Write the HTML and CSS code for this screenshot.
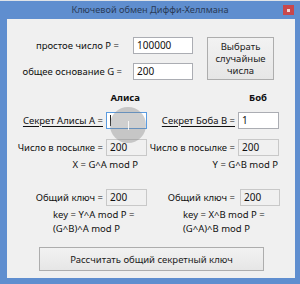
FILE: index.html
```html
<!DOCTYPE html>
<html lang="ru">
<head>
<meta charset="utf-8">
<link rel="stylesheet" href="styles.css">
</head>
<body>
<div class="window">
  <div class="titlebar">
    <span class="title">Ключевой обмен Диффи-Хеллмана</span>
    <span class="close"><span class="close-mark"></span></span>
  </div>
  <div class="client">
    <div class="params">
      <span class="lbl lbl-p">простое число P =</span>
      <span class="field">100000</span>
      <span class="lbl">общее основание G =</span>
      <span class="field">200</span>
      <div class="btn btn-random">Выбрать<br>случайные<br>числа</div>
    </div>

    <div class="parties">
      <div class="head head-a">Алиса</div>
      <div class="head head-b">Боб</div>

      <span class="lbl u r2">Секрет Алисы A =</span>
      <span class="field focus r2"><span class="caret"></span></span>
      <span class="lbl u r2">Секрет Боба B =</span>
      <span class="field r2">1</span>

      <span class="lbl r3">Число в посылке =</span>
      <span class="field ro r3">200</span>
      <span class="lbl r3">Число в посылке =</span>
      <span class="field ro r3">200</span>

      <div class="formula f-x">X = G^A mod P</div>
      <div class="formula f-y">Y = G^B mod P</div>
    </div>

    <div class="keys">
      <span class="lbl">Общий ключ =</span>
      <span class="field ro">200</span>
      <span class="lbl">Общий ключ =</span>
      <span class="field ro shift">200</span>

      <div class="keyf kf-a">key = Y^A mod P =<br>(G^B)^A mod P</div>
      <div class="keyf kf-b">key = X^B mod P =<br>(G^A)^B mod P</div>
    </div>

    <div class="bottom">
      <div class="btn btn-calc">Рассчитать общий секретный ключ</div>
    </div>

    <div class="touch"><span class="ibeam"></span></div>
  </div>
</div>
</body>
</html>
```

FILE: styles.css
```css
* { box-sizing: border-box; }
html, body { margin: 0; padding: 0; }
body {
  width: 300px;
  height: 284px;
  overflow: hidden;
  background: #dfe3e8;
  font-family: "Noto Sans", "Open Sans", sans-serif;
  font-size: 9.5px;
  color: #111;
}
.window {
  margin-top: 1px;
  width: 300px;
  height: 283px;
  background: #5f8ecf;
  display: flex;
  flex-direction: column;
}
.titlebar {
  height: 18px;
  display: flex;
  align-items: center;
  justify-content: center;
  position: relative;
}
.title {
  color: #2a3b57;
  font-size: 9.2px;
  line-height: 18px;
}
.close {
  position: absolute;
  left: 283px;
  top: 4px;
  width: 11px;
  height: 10px;
  background: #c9474b;
  display: flex;
  align-items: center;
  justify-content: center;
}
.close-mark {
  width: 3px;
  height: 3px;
  background: #f4d6d6;
}
.client {
  position: relative;
  margin: 0 5px 0 7px;
  height: 259px;
  background: #f0f0f0;
  display: flex;
  flex-direction: column;
}
.lbl {
  white-space: nowrap;
  justify-self: end;
  line-height: 14px;
}
.u { text-decoration: underline; text-underline-offset: 2px; }
.field {
  height: 17px;
  border: 1px solid #abadb3;
  background: #fff;
  padding: 0 3px;
  line-height: 15px;
  white-space: nowrap;
  display: flex;
  align-items: center;
  font-size: 10px;
}
.field.ro { background: #f0f0f0; border-color: #c8c8c8; }
.field.focus { border-color: #5a9be0; }
.caret { width: 1px; height: 11px; background: #222; }
.params {
  margin-top: 18px;
  display: grid;
  grid-template-columns: 115px 60px 70px;
  grid-template-rows: 17px 17px;
  column-gap: 11px;
  row-gap: 9px;
  align-items: center;
}
.params .field { grid-column: 2; }
.lbl-p { margin-right: 3px; }
.btn {
  border: 1px solid #adadad;
  background: linear-gradient(#f2f2f2, #e6e6e6);
  text-align: center;
  display: flex;
  align-items: center;
  justify-content: center;
}
.btn-random {
  grid-column: 3;
  grid-row: 1 / 3;
  align-self: stretch;
  margin-left: 3px;
  line-height: 12px;
  color: #222;
}
.parties, .keys {
  display: grid;
  grid-template-columns: 96px 41px 85px 41px;
  column-gap: 3px;
  align-items: center;
}
.parties {
  margin-top: 11px;
  grid-template-rows: 14px 24px 27px 16px;
}
.head {
  font-weight: bold;
  text-align: right;
  line-height: 14px;
  grid-row: 1;
}
.head-a { grid-column: 1 / 3; padding-right: 7px; }
.head-b { grid-column: 3 / 5; padding-right: 12px; }
.r2 { grid-row: 2; margin-top: 7px; }
.r3 { grid-row: 3; margin-top: 10px; }
.formula {
  grid-row: 4;
  text-align: right;
  line-height: 14px;
  margin-top: 2px;
}
.f-x { grid-column: 1 / 3; padding-right: 9px; }
.f-y { grid-column: 3 / 5; padding-right: 1px; }
.keys {
  margin-top: 17px;
  grid-template-rows: 17px 30px;
}
.shift { margin-left: 2px; margin-right: -1px; }
.keyf {
  grid-row: 2;
  line-height: 14px;
  margin-top: 2px;
  white-space: nowrap;
}
.kf-a { grid-column: 1 / 3; padding-left: 46px; }
.kf-b { grid-column: 3 / 5; padding-left: 33px; }
.bottom {
  margin-top: 11px;
  padding-left: 32px;
}
.btn-calc {
  width: 225px;
  height: 24px;
  color: #222;
}
.touch {
  position: absolute;
  left: 103px;
  top: 88px;
  width: 36px;
  height: 36px;
  border-radius: 50%;
  background: rgba(130, 130, 130, 0.38);
  display: flex;
  align-items: center;
  justify-content: center;
}
.ibeam {
  width: 1px;
  height: 9px;
  background: rgba(255,255,255,0.85);
}
```
